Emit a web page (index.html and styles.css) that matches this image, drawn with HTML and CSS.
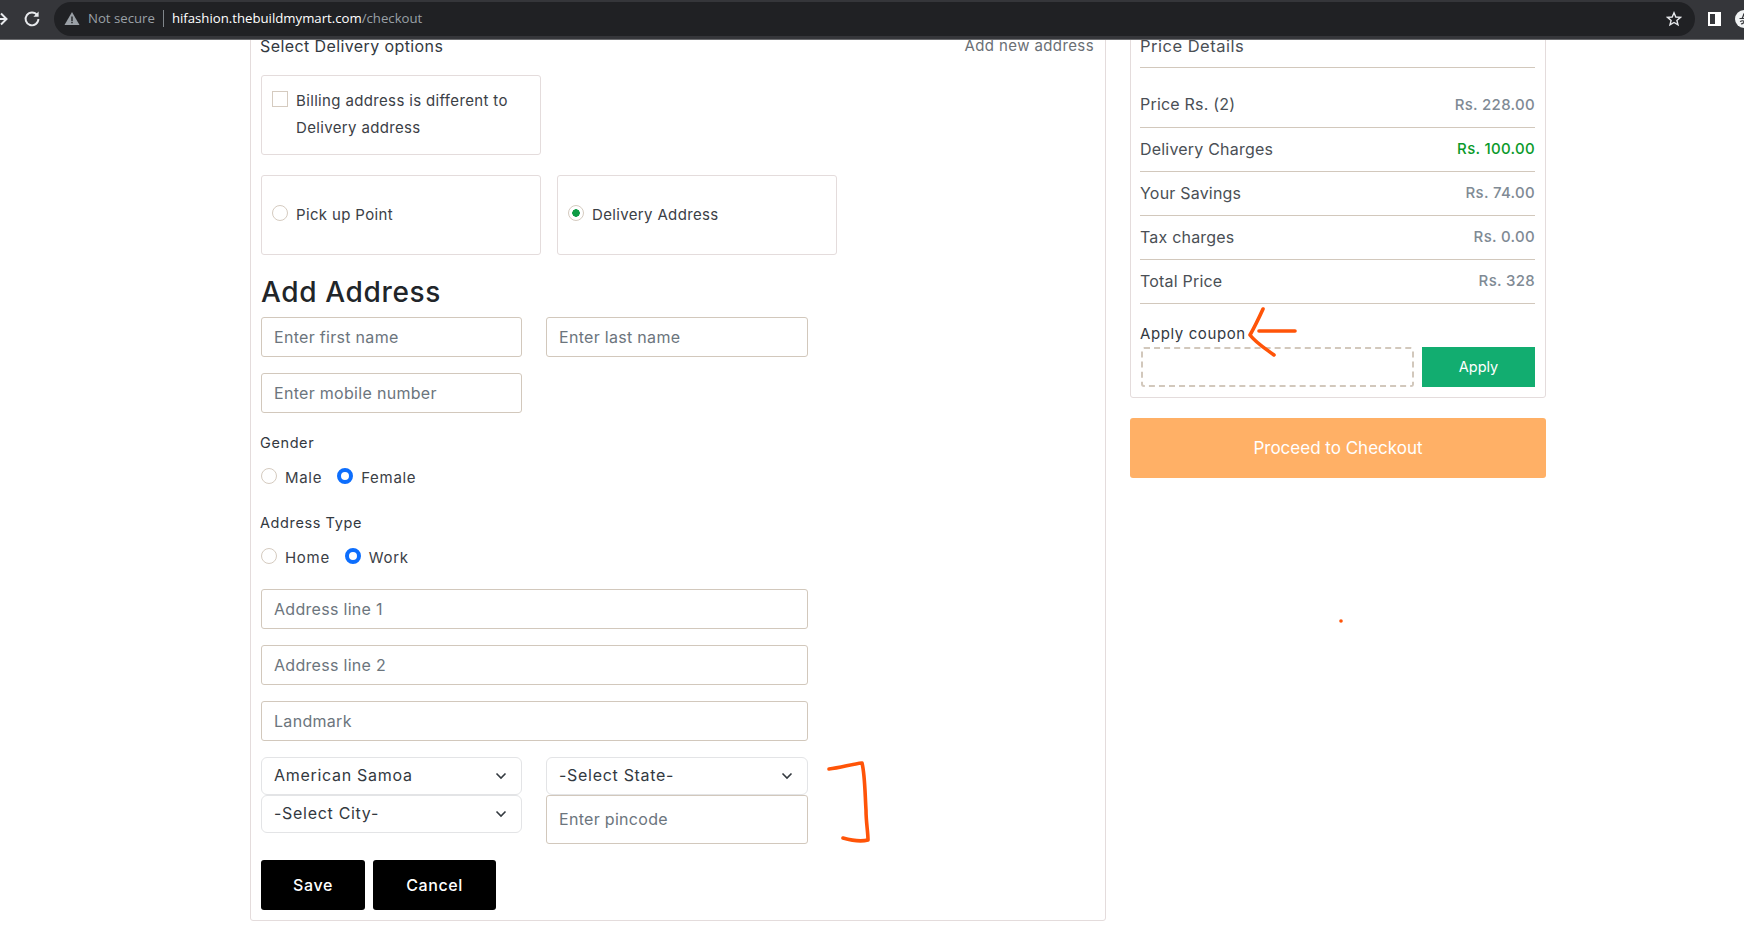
FILE: index.html
```html
<!DOCTYPE html>
<html lang="en">
<head>
<meta charset="utf-8">
<title>Checkout</title>
<link rel="stylesheet" href="styles.css">
</head>
<body>
<header class="chrome">
  <svg class="ico-fwd" width="12" height="16" viewBox="0 0 12 16"><path d="M0 8h9M4 2.5 9.5 8 4 13.5" fill="none" stroke="#e8eaed" stroke-width="2"/></svg>
  <svg class="ico-reload" width="18" height="18" viewBox="0 0 18 18"><path d="M14.2 5.2A6.4 6.4 0 1 0 15.4 9" fill="none" stroke="#e8eaed" stroke-width="1.9"/><path d="M15.6 1.6v5.2h-5.2z" fill="#e8eaed"/></svg>
  <div class="omnibox">
    <svg width="16" height="15" viewBox="0 0 16 15"><path d="M8 1 15.5 14H.5z" fill="#9aa0a6"/><path d="M7.3 5.5h1.4v4.4H7.3zM7.3 10.8h1.4v1.4H7.3z" fill="#202124"/></svg>
    <span class="secure">Not secure</span>
    <span class="divider"></span>
    <span class="url"><b>hifashion.thebuildmymart.com</b>/checkout</span>
    <svg class="ico-star" width="16" height="16" viewBox="0 0 16 16"><path d="M8 1.8 9.8 6l4.6.4-3.5 3 1.1 4.5L8 11.5l-4 2.4 1.1-4.5-3.5-3L6.200 6z" fill="none" stroke="#e8eaed" stroke-width="1.4"/></svg>
  </div>
  <span class="side-ico"></span>
  <svg class="avatar" width="18" height="18" viewBox="0 0 18 18"><circle cx="9" cy="9" r="9" fill="#f1f3f4"/><path d="M4.500 8.500h9M7 8.500c1-1.500 1.500-3 2-5M5.500 11.500c1-1 3-1 3.500 0 .4 1-1 2-3 2.500M5.500 11.500v.5" fill="none" stroke="#35363a" stroke-width="1.200"/></svg>
</header>

<main class="page">
  <section class="card left">
    <div class="head-row"><span>Select Delivery options</span><a class="add-new">Add new address</a></div>

    <div class="opt-row">
      <label class="opt tall"><input type="checkbox" class="chk"><span>Billing address is different to<br>Delivery address</span></label>
    </div>
    <div class="opt-row">
      <label class="opt"><input type="radio" name="d" class="rad"><span>Pick up Point</span></label>
      <label class="opt"><input type="radio" name="d" class="rad green" checked><span>Delivery Address</span></label>
    </div>

    <h2 class="add-title">Add Address</h2>
    <div class="two">
      <input class="field" placeholder="Enter first name">
      <input class="field" placeholder="Enter last name">
    </div>
    <div class="two">
      <input class="field" placeholder="Enter mobile number">
    </div>

    <div class="group-label first">Gender</div>
    <div class="radios">
      <label><input type="radio" name="g" class="rad"><span>Male</span></label>
      <label><input type="radio" name="g" class="rad blue" checked><span>Female</span></label>
    </div>
    <div class="group-label second">Address Type</div>
    <div class="radios">
      <label><input type="radio" name="a" class="rad"><span>Home</span></label>
      <label><input type="radio" name="a" class="rad blue" checked><span>Work</span></label>
    </div>

    <div class="wide-fields">
      <input class="field" placeholder="Address line 1">
      <input class="field" placeholder="Address line 2">
      <input class="field" placeholder="Landmark">
    </div>

    <div class="selects">
      <div class="sel-col">
        <select class="sel"><option>American Samoa</option></select>
        <select class="sel"><option>-Select City-</option></select>
      </div>
      <div class="sel-col">
        <select class="sel"><option>-Select State-</option></select>
        <input class="field pin" placeholder="Enter pincode">
      </div>
    </div>

    <div class="actions">
      <button class="btn save">Save</button>
      <button class="btn cancel">Cancel</button>
    </div>
  </section>

  <aside class="right">
    <section class="card price">
      <div class="price-title">Price Details</div>
      <div class="row"><span>Price Rs. (2)</span><span class="val">Rs. 228.00</span></div>
      <div class="row"><span>Delivery Charges</span><span class="val free">Rs. 100.00</span></div>
      <div class="row"><span>Your Savings</span><span class="val">Rs. 74.00</span></div>
      <div class="row"><span>Tax charges</span><span class="val">Rs. 0.00</span></div>
      <div class="row"><span>Total Price</span><span class="val">Rs. 328</span></div>
      <div class="coupon-label">Apply coupon</div>
      <div class="coupon">
        <input class="coupon-input">
        <button class="apply">Apply</button>
      </div>
    </section>
    <button class="proceed">Proceed to Checkout</button>
  </aside>
</main>

<svg class="scribble" width="1744" height="942" viewBox="0 0 1744 942">
  <g fill="none" stroke="#ff5408" stroke-width="3.6" stroke-linecap="round" stroke-linejoin="round">
    <path d="M1263 309 C1258 320 1254 328 1250 335 C1256 343 1266 349 1274 355"/>
    <path d="M1259 331 H1295"/>
    <path d="M829 769 C840 768 852 764 862 763 C865 775 865 795 866 810 C866 822 868 832 868 840 C860 842 850 840 843 838"/>
  </g>
  <circle cx="1341" cy="621" r="1.800" fill="#ff5408"/>
</svg>
</body>
</html>
```

FILE: styles.css
```css
* { box-sizing: border-box; }
html, body { margin: 0; padding: 0; height: 942px; overflow: hidden; background: #fff; }
body { font-family: "Inter", "Liberation Sans", sans-serif; font-size: 15px; color: #33393f; }

/* browser chrome overlays the scrolled page */
.chrome {
  position: absolute; top: 0; left: 0; right: 0; height: 40px; z-index: 5;
  background: #35363a; border-bottom: 1px solid #6a6b6e;
  display: flex; align-items: center; padding-bottom: 2px;
}
.ico-fwd { margin-left: -3px; flex: none; }
.ico-reload { margin-left: 14px; flex: none; }
.omnibox {
  flex: 1; height: 34px; margin-left: 13px; border-radius: 17px;
  background: #202124; display: flex; align-items: center; padding: 0 13px 0 10px;
  font-family: "Open Sans", "Liberation Sans", sans-serif; font-size: 13.200px; color: #9aa0a6;
}
.secure { margin-left: 8px; position: relative; top: -1px; }
.divider { width: 1px; height: 17px; background: #80868b; margin: 0 8px; }
.url { flex: 1; position: relative; top: -1px; }
.url b { font-weight: 400; color: #fff; }
.side-ico { width: 13px; height: 14px; margin-left: 13px; border: 2px solid #fff; border-right-width: 6px; flex: none; }
.avatar { margin: 0 -9px 0 14px; flex: none; }

.page { display: flex; gap: 24px; padding-left: 250px; height: 942px; align-items: flex-start; }
.card { border: 1px solid #e4dcdc; border-radius: 3px; background: #fff; }

.left { width: 856px; height: 921px; padding: 35px 10px 0 10px; }
.head-row { display: flex; justify-content: space-between; line-height: 20px; font-size: 16px; letter-spacing: .4px; color: #33393f; padding-right: 1px; margin-left: -1px; }
.add-new { color: #6a6f75; font-size: 15px; letter-spacing: .4px; }

.opt-row { display: flex; gap: 16px; margin-top: 20px; }
.head-row + .opt-row { margin-top: 19px; }
.opt {
  width: 280px; height: 80px; border: 1px solid #e4dcdc; border-radius: 3px;
  display: flex; align-items: center; padding: 0 0 2px 10px; gap: 8px; font-size: 15px; letter-spacing: .35px; color: #3b4046;
}
.opt.tall { align-items: flex-start; padding-top: 11px; line-height: 27px; }
.opt.tall .chk { margin-top: 4px; }

input[type=radio], input[type=checkbox] { appearance: none; margin: 0; flex: none; background: #fff; }
.chk { width: 16px; height: 16px; border: 1px solid #d5cbc0; }
.rad { width: 16px; height: 16px; border: 1px solid #d5cbc0; border-radius: 50%; position: relative; top: -1px; }
.rad.green { background: radial-gradient(circle, #0d9c45 0 3.5px, #fff 4px); }
.rad.blue { border: 4.500px solid #0d6efd; }

.add-title { font-size: 28px; letter-spacing: .65px; font-weight: 500; line-height: 34px; margin: 20px 0 8px; color: #212529; }
.two { display: flex; gap: 24px; margin-bottom: 16px; }
.field {
  display: block; width: 262px; height: 40px; border: 1px solid #d2c8bc; border-radius: 3px;
  padding: 0 12px 1px; font: 16px "Inter", "Liberation Sans", sans-serif; letter-spacing: .3px; color: #333; background: #fff; outline: 0;
}
.two .field:first-child { width: 261px; }
.field::placeholder { color: #6c757d; opacity: 1; }

.group-label { font-size: 14.500px; letter-spacing: .6px; line-height: 20px; color: #33393f; margin-left: -1px; }
.group-label.first { margin-top: 20px; }
.group-label.second { margin-top: 25px; }
.radios { display: flex; gap: 15px; margin-top: 13px; height: 22px; font-size: 15px; letter-spacing: .7px; color: #3b4046; }
.radios label { display: flex; align-items: center; gap: 8px; }

.wide-fields { display: flex; flex-direction: column; gap: 16px; margin-top: 21px; }
.wide-fields .field { width: 547px; }

.selects { display: flex; gap: 24px; margin-top: 16px; }
.sel-col { display: flex; flex-direction: column; width: 262px; }
.sel-col:first-child { width: 261px; }
.sel {
  appearance: none; width: 100%; height: 38px; border: 1px solid #e3e4e6; border-radius: 6px;
  padding: 0 12px 2px; font: 16px "Inter", "Liberation Sans", sans-serif; letter-spacing: .7px; color: #33393f;
  background: #fff url("data:image/svg+xml;utf8,<svg xmlns='http://www.w3.org/2000/svg' width='12' height='8' viewBox='0 0 12 8'><path d='M1.500 1.500 6 6l4.500-4.500' fill='none' stroke='%23343a40' stroke-width='1.600'/></svg>") no-repeat right 14px center;
}
.field.pin { height: 49px; }

.actions { display: flex; gap: 8px; margin-top: 16px; }
.btn { height: 50px; padding-bottom: 2px; background: #000; color: #fff; border: 0; border-radius: 3px; font: 500 16px "Inter", "Liberation Sans", sans-serif; letter-spacing: .6px; }
.btn.save { width: 104px; }
.btn.cancel { width: 123px; }

.right { width: 416px; display: flex; flex-direction: column; gap: 20px; }
.price { height: 398px; padding: 35px 10px 0 9px; }
.price-title { font-size: 16.500px; letter-spacing: .5px; line-height: 20px; height: 32px; border-bottom: 1px solid #d2c8bc; color: #4a4f55; }
.row { display: flex; justify-content: space-between; align-items: center; height: 44px; padding-bottom: 2px; border-bottom: 1px solid #d2c8bc; font-size: 16px; letter-spacing: .2px; color: #4a4f55; }
.price-title + .row { height: 60px; padding-top: 15px; }
.val { color: #808a94; font-size: 15px; font-weight: 500; letter-spacing: .3px; }
.val.free { color: #0a9a2a; }
.coupon-label { margin-top: 20px; line-height: 20px; font-size: 15px; letter-spacing: .6px; color: #33393f; }
.coupon { display: flex; gap: 8px; margin-top: 3px; }
.coupon-input { width: 273px; height: 40px; border: 2px dashed #d2c8bc; border-radius: 3px; background: #fff; margin-left: 1px; }
.apply { width: 113px; height: 40px; padding-bottom: 2px; border: 0; background: #12ad70; color: #fff; font: 14.500px "Inter", "Liberation Sans", sans-serif; }
.proceed { width: 416px; height: 60px; border: 0; border-radius: 3px; background: #ffb066; color: #fff; font: 17px "Inter", "Liberation Sans", sans-serif; }

.scribble { position: absolute; top: 0; left: 0; z-index: 6; pointer-events: none; }
```
